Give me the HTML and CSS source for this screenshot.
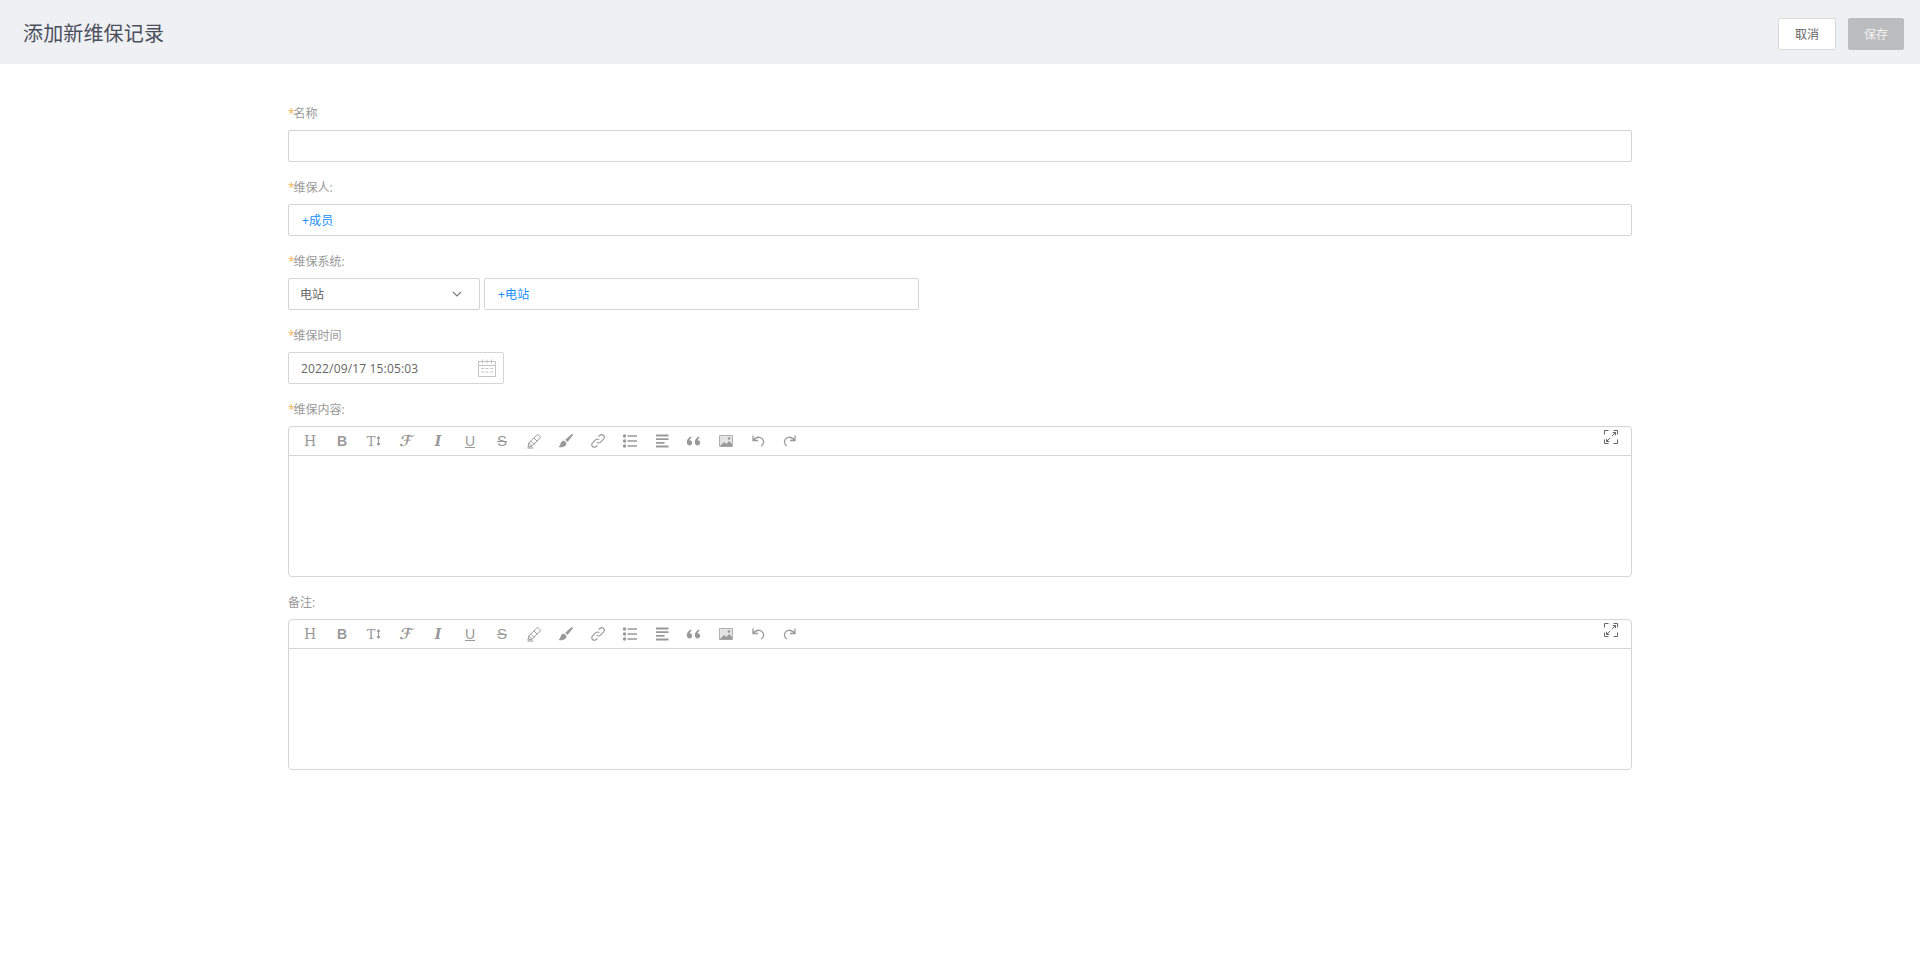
FILE: index.html
```html
<!DOCTYPE html>
<html lang="zh-CN">
<head>
<meta charset="utf-8">
<title>添加新维保记录</title>
<link rel="stylesheet" href="styles.css">
</head>
<body>
<svg class="defs" width="0" height="0" aria-hidden="true">
  <defs>
    <symbol id="i-tt" viewBox="0 0 6 14"><path d="M3 2v10M1.200 4.200 3 2l1.800 2.200M1.200 9.800 3 12l1.800-2.200" fill="none" stroke="currentColor" stroke-width="1.300"/></symbol>
    <symbol id="i-marker" viewBox="0 0 16 16"><path d="M2 14l.8-4L10.500 2.300c.7-.7 1.600-.7 2.300 0l.9.900c.7.7.7 1.600 0 2.300L6 13.200zM2.800 10 6 13.200M5 8.200l3 3M8 5l3 3M1.500 15h6" fill="none" stroke="currentColor" stroke-width="1"/></symbol>
    <symbol id="i-brush" viewBox="0 0 16 16"><path d="M14.600 1.200c.5.4.4 1-.1 1.600L9.600 9 7.200 6.800l5.900-5.200c.6-.5 1.100-.7 1.500-.4zM6.400 7.800l2.200 2.100c-.2 2.400-2 4.400-6.900 4.300-.7 0-1.100-.6-.6-.9 1.500-.9.900-2.300 2-4.100.6-1 2-1.700 3.300-1.400z" fill="currentColor"/></symbol>
    <symbol id="i-link" viewBox="0 0 16 16"><path d="M6.800 9.200a2.600 2.600 0 0 0 3.700 0l3-3a2.600 2.600 0 0 0-3.700-3.700L8.600 3.700M9.200 6.800a2.600 2.600 0 0 0-3.700 0l-3 3a2.600 2.600 0 0 0 3.700 3.700l1.200-1.200" fill="none" stroke="currentColor" stroke-width="1.100"/></symbol>
    <symbol id="i-list" viewBox="0 0 16 16"><path d="M5.500 3h9.500M5.500 8h9.500M5.500 13h9.500" stroke="currentColor" stroke-width="1.300"/><circle cx="2.500" cy="3" r="1.700" fill="currentColor"/><circle cx="2.500" cy="8" r="1.700" fill="currentColor"/><circle cx="2.500" cy="13" r="1.700" fill="currentColor"/></symbol>
    <symbol id="i-align" viewBox="0 0 16 16"><path d="M2 2.500h12.500M2 6.200h12.500M2 9.800h8.500M2 13.500h12.500" stroke="currentColor" stroke-width="1.800"/></symbol>
    <symbol id="i-quote" viewBox="0 0 16 16"><path d="M5 3.500C2.200 4.700.8 6.800.8 9.300c0 1.900 1.100 3.200 2.700 3.200 1.500 0 2.700-1.100 2.700-2.700 0-1.500-1.100-2.600-2.500-2.600.2-.9.800-1.800 1.900-2.400zM13 3.500c-2.800 1.200-4.200 3.300-4.200 5.800 0 1.900 1.100 3.200 2.700 3.200 1.500 0 2.700-1.100 2.700-2.700 0-1.500-1.100-2.600-2.500-2.600.2-.9.800-1.800 1.900-2.400z" fill="currentColor"/></symbol>
    <symbol id="i-image" viewBox="0 0 16 16"><path d="M1.500 2.500h13v11h-13z" fill="#e4e4e4" stroke="#b0b0b0" stroke-width="1"/><path d="M2 13l4-4 2.500 2L11 8l3 3v2.500H2z" fill="currentColor"/><circle cx="11" cy="5.500" r="1.300" fill="currentColor"/></symbol>
    <symbol id="i-undo" viewBox="0 0 16 16"><path d="M3 2.500v5h5M3 7.500C5 5 7.500 4 9.500 4.300c3.500.7 5 4.200 3.500 6.700-.4.700-1 1.500-1.800 2" fill="none" stroke="currentColor" stroke-width="1.300"/></symbol>
    <symbol id="i-redo" viewBox="0 0 16 16"><path d="M13 2.500v5H8M13 7.500C11 5 8.500 4 6.500 4.300 3 5 1.500 8.500 3 11c.4.700 1 1.500 1.800 2" fill="none" stroke="currentColor" stroke-width="1.300"/></symbol>
    <symbol id="i-full" viewBox="0 0 14 14"><path d="M.5 4.500v-4h4M9.500.5h4v4M.5 9.500v4h4M9.500 13.500h4v-4" fill="none" stroke="currentColor"/><path d="M7.800 6.200l3.700-3.700M8.800 2.500h2.700v2.700M6.200 7.800l-3.700 3.700M5.200 11.500H2.500V8.800" fill="none" stroke="currentColor"/></symbol>
  </defs>
</svg>

<header class="topbar">
  <h1 class="title">添加新维保记录</h1>
  <div class="actions">
    <button class="btn btn-cancel" type="button">取消</button>
    <button class="btn btn-save" type="button">保存</button>
  </div>
</header>

<main class="form">
  <div class="field">
    <div class="label"><span class="req">*</span>名称</div>
    <div class="box"></div>
  </div>
  <div class="field">
    <div class="label"><span class="req">*</span>维保人:</div>
    <div class="box"><span class="add">+成员</span></div>
  </div>
  <div class="field">
    <div class="label"><span class="req">*</span>维保系统:</div>
    <div class="row">
      <div class="box select">
        <span class="select-value">电站</span>
        <svg class="chevron" width="10" height="7" viewBox="0 0 10 7"><path d="M1 1l4 4 4-4" fill="none" stroke="currentColor" stroke-width="1.100"/></svg>
      </div>
      <div class="box station"><span class="add">+电站</span></div>
    </div>
  </div>
  <div class="field">
    <div class="label"><span class="req">*</span>维保时间</div>
    <div class="box date">
      <span class="date-value">2022/09/17 15:05:03</span>
      <svg class="calendar" width="18" height="18" viewBox="0 0 18 18"><path d="M.5 2.500h17v15H.5zM.5 6.500h17M4.500.5v4M9 .5v4M13.500.5v4" fill="none" stroke="currentColor"/><path d="M3 9.500h3M7.500 9.500h3M12 9.500h3M3 13h3M7.500 13h3M12 13h3" stroke="currentColor"/></svg>
    </div>
  </div>
  <div class="field">
    <div class="label"><span class="req">*</span>维保内容:</div>
    <div class="editor">
      <div class="toolbar">
        <span class="tool g-h">H</span>
        <span class="tool g-b">B</span>
        <span class="tool g-t">T<svg class="tt" width="5" height="12"><use href="#i-tt"/></svg></span>
        <span class="tool g-f"><span class="slant">ℱ</span></span>
        <span class="tool g-i">I</span>
        <span class="tool g-u">U</span>
        <span class="tool g-s">S</span>
        <span class="tool"><svg class="ic" width="16" height="16"><use href="#i-marker"/></svg></span>
        <span class="tool"><svg class="ic" width="16" height="16"><use href="#i-brush"/></svg></span>
        <span class="tool"><svg class="ic" width="16" height="16"><use href="#i-link"/></svg></span>
        <span class="tool"><svg class="ic" width="16" height="16"><use href="#i-list"/></svg></span>
        <span class="tool"><svg class="ic" width="16" height="16"><use href="#i-align"/></svg></span>
        <span class="tool"><svg class="ic" width="16" height="16"><use href="#i-quote"/></svg></span>
        <span class="tool"><svg class="ic" width="16" height="16"><use href="#i-image"/></svg></span>
        <span class="tool"><svg class="ic" width="16" height="16"><use href="#i-undo"/></svg></span>
        <span class="tool"><svg class="ic" width="16" height="16"><use href="#i-redo"/></svg></span>
        <svg class="full" width="14" height="14"><use href="#i-full"/></svg>
      </div>
      <div class="editor-body"></div>
    </div>
  </div>
  <div class="field">
    <div class="label">备注:</div>
    <div class="editor">
      <div class="toolbar">
        <span class="tool g-h">H</span>
        <span class="tool g-b">B</span>
        <span class="tool g-t">T<svg class="tt" width="5" height="12"><use href="#i-tt"/></svg></span>
        <span class="tool g-f"><span class="slant">ℱ</span></span>
        <span class="tool g-i">I</span>
        <span class="tool g-u">U</span>
        <span class="tool g-s">S</span>
        <span class="tool"><svg class="ic" width="16" height="16"><use href="#i-marker"/></svg></span>
        <span class="tool"><svg class="ic" width="16" height="16"><use href="#i-brush"/></svg></span>
        <span class="tool"><svg class="ic" width="16" height="16"><use href="#i-link"/></svg></span>
        <span class="tool"><svg class="ic" width="16" height="16"><use href="#i-list"/></svg></span>
        <span class="tool"><svg class="ic" width="16" height="16"><use href="#i-align"/></svg></span>
        <span class="tool"><svg class="ic" width="16" height="16"><use href="#i-quote"/></svg></span>
        <span class="tool"><svg class="ic" width="16" height="16"><use href="#i-image"/></svg></span>
        <span class="tool"><svg class="ic" width="16" height="16"><use href="#i-undo"/></svg></span>
        <span class="tool"><svg class="ic" width="16" height="16"><use href="#i-redo"/></svg></span>
        <svg class="full" width="14" height="14"><use href="#i-full"/></svg>
      </div>
      <div class="editor-body"></div>
    </div>
  </div>
</main>
</body>
</html>
```

FILE: styles.css
```css
* { box-sizing: border-box; }
html, body { margin: 0; padding: 0; height: 100%; background: #fff; }
body { font-family: "Open Sans", "Noto Sans CJK SC", sans-serif; font-size: 12px; color: #666; overflow: hidden; }
.defs { position: absolute; }

.topbar { height: 64px; padding: 4px 16px 0 23px; background: #eff0f4; display: flex; align-items: center; justify-content: space-between; }
.title { margin: 0; font-size: 20px; font-weight: 400; line-height: 28px; letter-spacing: .15px; color: #4a4f5b; }
.actions { display: flex; gap: 12px; }
.btn { height: 32px; border-radius: 2px; font: inherit; font-size: 12px; padding: 0; }
.btn-cancel { width: 58px; background: #fff; border: 1px solid #d9d9d9; color: #666; }
.btn-save { width: 56px; background: #bbbcbe; border: 1px solid #bbbcbe; color: #f2f2f2; }

.form { width: 1344px; margin: 0 auto; padding-top: 40px; }
.field { margin-bottom: 16px; }
.field:last-child { margin-bottom: 0; }
.label { font-size: 12px; line-height: 20px; margin-bottom: 6px; color: #999; }
.req { color: #f7b55a; margin-right: -1px; }
.box { height: 32px; border: 1px solid #d5d5d5; border-radius: 2px; display: flex; align-items: center; padding-left: 13px; background: #fff; }
.add { color: #1890ff; letter-spacing: .2px; }
.row { display: flex; gap: 4px; }
.select { width: 192px; padding: 0 17px 0 12px; justify-content: space-between; }
.select-value { color: #666; margin-left: -1px; }
.chevron { color: #777; }
.station { width: 435px; }
.date { width: 216px; padding: 0 7px 0 12px; justify-content: space-between; }
.date-value { color: #666; letter-spacing: .16px; }
.calendar { color: #c4c4c4; }

.editor { height: 151px; border: 1px solid #d5d5d5; border-radius: 4px; display: flex; flex-direction: column; }
.toolbar { height: 29px; flex: none; border-bottom: 1px solid #d5d5d5; display: flex; align-items: center; padding-left: 5px; }
.tool { width: 32px; height: 28px; flex: none; display: flex; align-items: center; justify-content: center; color: #999; line-height: 1; user-select: none; }
.ic { display: block; }
.tt { margin-left: 1px; }
.slant { display: inline-block; transform: skewX(-10deg); }
.g-h { font-family: "DejaVu Serif", serif; font-size: 14px; padding-bottom: 1px; }
.g-b { font-family: "Liberation Sans", sans-serif; font-size: 14px; font-weight: 700; padding-bottom: 1px; }
.g-t { font-family: "DejaVu Serif", serif; font-size: 13px; }
.g-f { font-family: "DejaVu Sans", serif; font-size: 15px; font-weight: 700; }
.g-i { font-family: "DejaVu Serif", serif; font-size: 14px; font-style: italic; font-weight: 700; }
.g-u { font-family: "Liberation Sans", sans-serif; font-size: 14px; text-decoration: underline; padding-bottom: 1px; }
.g-s { font-family: "Liberation Sans", sans-serif; font-size: 15px; text-decoration: line-through; padding-bottom: 1px; }
.full { margin-left: auto; margin-right: 13px; margin-top: -8px; color: #666; }
.editor-body { flex: 1; }
```
